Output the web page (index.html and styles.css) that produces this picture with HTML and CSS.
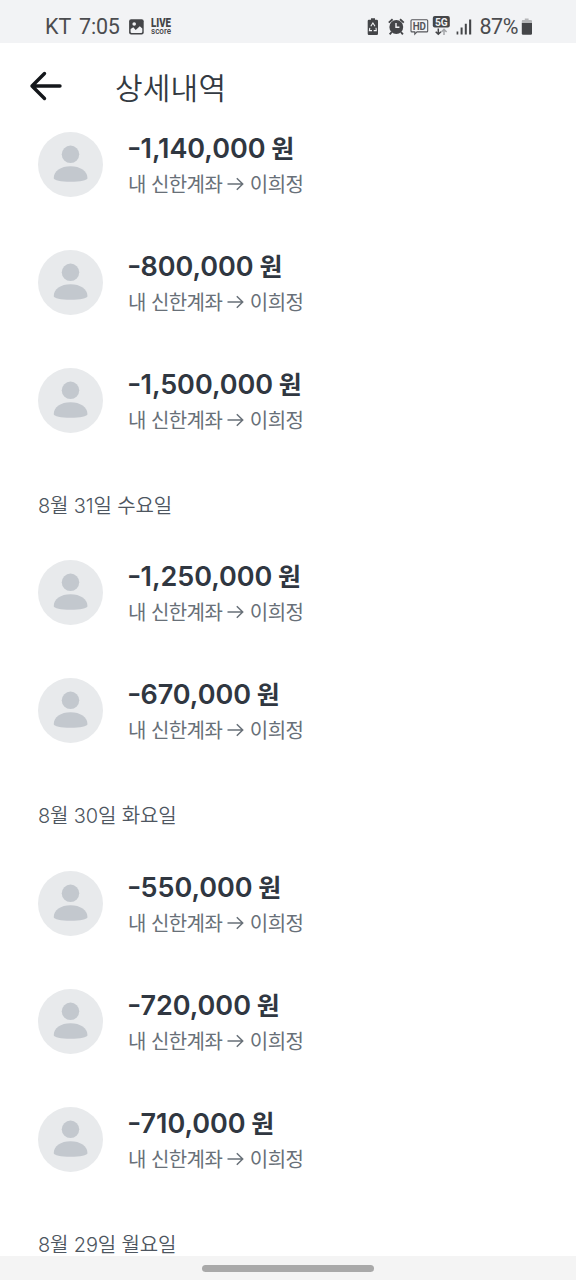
FILE: index.html
```html
<!DOCTYPE html>
<html lang="ko">
<head>
<meta charset="utf-8">
<title>상세내역</title>
<link rel="stylesheet" href="styles.css">
</head>
<body>
<svg width="0" height="0" class="defs">
  <symbol id="person" viewBox="0 0 64 64">
    <circle cx="32" cy="32" r="32" fill="#e8eaec"/>
    <circle cx="32" cy="22" r="8.600" fill="#c3c8ce"/>
    <path d="M15.500 45.500C15.500 38.500 22.500 33.800 32 33.800S48.700 38.500 48.700 45.500C48.700 47.300 41.500 49 32 49S15.500 47.300 15.500 45.500Z" fill="#c3c8ce"/>
  </symbol>
  <symbol id="to" viewBox="0 0 18 16">
    <path d="M.500 8H15.500M9.800 2.200L15.700 8L9.800 13.800" fill="none" stroke="currentColor" stroke-width="1.500"/>
  </symbol>
</svg>
<div class="screen">
  <div class="status">
    <span class="carrier">KT</span>
    <span class="clock">7:05</span>
    <svg class="picture" width="15" height="16" viewBox="0 0 15 16">
      <rect x=".1" y=".2" width="14.600" height="15.300" rx="2" fill="#444548"/>
      <path d="M1.600 10L4.300 8.300L6.700 11L10.800 7.200L13.300 9.600V12.700q0 1.300-1.300 1.300H2.900q-1.300 0-1.300-1.300Z" fill="#f2f3f5"/>
      <circle cx="5.200" cy="5" r="1.800" fill="#f2f3f5"/>
    </svg>
    <svg class="live" width="24" height="24" viewBox="0 0 24 24">
      <text x="0" y="12" class="live-top" textLength="20" lengthAdjust="spacingAndGlyphs">LIVE</text>
      <text x="0" y="19" class="live-bottom" textLength="20" lengthAdjust="spacingAndGlyphs">score</text>
    </svg>
    <svg class="right-icons" width="121" height="24" viewBox="0 0 121 24" fill="#444548">
      <path d="M5 3.200h4v1.600h1.800q1.200 0 1.200 1.200v12.700q0 1.300-1.200 1.300H2.900q-1.200 0-1.200-1.300V6q0-1.200 1.200-1.200H5Z"/>
      <path d="M4.800 11.200L6.900 8L9 11.200M10 12.800L10.300 15.600H7.700M6 15.600H3.400L3.800 12.800" fill="none" stroke="#f2f3f5" stroke-width="1.100"/>
      <circle cx="30.300" cy="12" r="6.900"/>
      <path d="M22.800 7.600L26.600 4.300M34 4.300L37.800 7.600M25.700 17L23.700 19.400M34.900 17L36.900 19.400" stroke="#444548" stroke-width="1.900"/>
      <path d="M30 7.900V12.300H33.400" fill="none" stroke="#f2f3f5" stroke-width="1.400"/>
      <path d="M46 4.800H60.700q1 0 1 1V15.900q0 1-1 1H51L48.800 19.200V16.900H46q-1 0-1-1V5.800q0-1 1-1Z" fill="none" stroke="#55565a" stroke-width="1.100"/>
      <text x="46.700" y="15" class="hd" textLength="13.300" lengthAdjust="spacingAndGlyphs">HD</text>
      <rect x="66.800" y="1" width="17" height="11.500" rx="2"/>
      <text x="69" y="10.700" class="five-g" textLength="12.800" lengthAdjust="spacingAndGlyphs">5G</text>
      <path d="M72.300 13.500V19M69.700 16.700L72.300 19.300L74.900 16.700" fill="none" stroke="#444548" stroke-width="1.500"/>
      <path d="M78 20V14.500M75.400 17L78 14.400L80.600 17" fill="none" stroke="#a4a6a9" stroke-width="1.500"/>
      <path d="M90.600 16.500h1.700V19.500h-1.700ZM94.600 12.500h2V19.500h-2ZM98.800 8.800h2V19.500h-2ZM103.100 4.500h2.100V19.500h-2.100Z"/>
    </svg>
    <span class="percent">87%</span>
    <svg class="battery" width="12" height="18" viewBox="0 0 12 18">
      <path d="M3.800 .500h3.800V2H10q1 0 1 1V5H.800V3q0-1 1-1H3.800Z" fill="#b5b6b8"/>
      <path d="M.800 5H11V15.500q0 1.200-1.200 1.200H2Q.800 16.700 .800 15.500Z" fill="#444548"/>
    </svg>
  </div>
  <header class="header">
    <svg class="back" width="34" height="30" viewBox="0 0 34 30">
      <path d="M31 15H3M15.500 2.500L3 15L15.500 27.500" fill="none" stroke="#14171b" stroke-width="3.400" stroke-linecap="round" stroke-linejoin="round"/>
    </svg>
    <h1>상세내역</h1>
  </header>
  <main class="list">
    <div class="row"><svg class="avatar"><use href="#person"/></svg><div class="info"><div class="amount"><span class="minus">-</span>1,140,000 <em>원</em></div><div class="route">내 신한계좌<svg class="arrow"><use href="#to"/></svg>이희정</div></div></div>
    <div class="row"><svg class="avatar"><use href="#person"/></svg><div class="info"><div class="amount"><span class="minus">-</span>800,000 <em>원</em></div><div class="route">내 신한계좌<svg class="arrow"><use href="#to"/></svg>이희정</div></div></div>
    <div class="row"><svg class="avatar"><use href="#person"/></svg><div class="info"><div class="amount"><span class="minus">-</span>1,500,000 <em>원</em></div><div class="route">내 신한계좌<svg class="arrow"><use href="#to"/></svg>이희정</div></div></div>
    <h2 class="date">8월 31일 수요일</h2>
    <div class="row"><svg class="avatar"><use href="#person"/></svg><div class="info"><div class="amount"><span class="minus">-</span>1,250,000 <em>원</em></div><div class="route">내 신한계좌<svg class="arrow"><use href="#to"/></svg>이희정</div></div></div>
    <div class="row"><svg class="avatar"><use href="#person"/></svg><div class="info"><div class="amount"><span class="minus">-</span>670,000 <em>원</em></div><div class="route">내 신한계좌<svg class="arrow"><use href="#to"/></svg>이희정</div></div></div>
    <h2 class="date">8월 30일 화요일</h2>
    <div class="row"><svg class="avatar"><use href="#person"/></svg><div class="info"><div class="amount"><span class="minus">-</span>550,000 <em>원</em></div><div class="route">내 신한계좌<svg class="arrow"><use href="#to"/></svg>이희정</div></div></div>
    <div class="row"><svg class="avatar"><use href="#person"/></svg><div class="info"><div class="amount"><span class="minus">-</span>720,000 <em>원</em></div><div class="route">내 신한계좌<svg class="arrow"><use href="#to"/></svg>이희정</div></div></div>
    <div class="row"><svg class="avatar"><use href="#person"/></svg><div class="info"><div class="amount"><span class="minus">-</span>710,000 <em>원</em></div><div class="route">내 신한계좌<svg class="arrow"><use href="#to"/></svg>이희정</div></div></div>
    <h2 class="date">8월 29일 월요일</h2>
  </main>
  <footer class="nav"><div class="handle"></div></footer>
</div>
</body>
</html>
```
FILE: styles.css
```css
* { box-sizing: border-box; }
body { margin: 0; background: #fff; }
.defs { position: absolute; }
svg { display: block; flex: none; }
.screen {
  width: 576px;
  height: 1280px;
  display: flex;
  flex-direction: column;
  overflow: hidden;
  font-family: Inter, "Noto Sans CJK KR", sans-serif;
}
.status {
  flex: none;
  height: 43px;
  padding: 10px 0 0 45px;
  display: flex;
  align-items: center;
  background: #f2f3f5;
  color: #4b4c4f;
  font: 400 21.5px/33px Roboto, sans-serif;
}
.carrier { width: 34px; }
.clock { width: 49px; letter-spacing: -0.2px; }
.picture { margin-left: 1px; }
.live { margin-left: 7px; fill: #444548; overflow: visible; }
.live-top { font: 900 12.5px Roboto, sans-serif; }
.live-bottom { font: 500 8.5px Roboto, sans-serif; }
.right-icons { margin-left: 190.5px; }
.hd { font: 700 10px Roboto, sans-serif; fill: #55565a; }
.five-g { font: 700 11.5px Roboto, sans-serif; fill: #f2f3f5; }
.percent { width: 40px; margin-left: -7px; font-size: 21.5px; letter-spacing: -0.5px; }
.battery { margin-left: 1px; }
.header {
  flex: none;
  height: 88px;
  padding: 0 29px;
  display: flex;
  align-items: flex-start;
}
.back { margin-top: 28px; }
.header h1 {
  margin: 21px 0 0 52px;
  font: 350 30px/44px "Noto Sans CJK KR", sans-serif;
  letter-spacing: 0.2px;
  color: #333a42;
}
.list { flex: none; height: 1125px; padding: 0.5px 0 0 38px; overflow: hidden; }
.row { height: 118px; display: flex; gap: 25.5px; }
.avatar { width: 65px; height: 65px; }
.info { margin-left: -0.5px; white-space: nowrap; }
.amount {
  height: 34px;
  font-size: 27px;
  line-height: 31px;
  font-weight: 600;
  letter-spacing: -0.05px;
  color: #303741;
}
.minus { display: inline-block; transform: translate(-1px, -1px) scaleX(1.15); transform-origin: left; }
.amount em { margin-left: -1px; font: 700 25px/31px "Noto Sans CJK KR", sans-serif; }
.route {
  height: 36px;
  display: flex;
  align-items: center;
  font: 400 20px/36px "Noto Sans CJK KR", sans-serif;
  letter-spacing: -0.55px;
  color: #687078;
}
.arrow { width: 18px; height: 16px; margin: 0 4.5px 0 5px; }
.date {
  height: 74.5px;
  margin: 0;
  font: 350 20px/41px Inter, "Noto Sans CJK KR", sans-serif;
  letter-spacing: -0.15px;
  color: #4e565f;
}
.nav {
  flex: none;
  height: 24px;
  margin-top: auto;
  padding: 9px 0 0 202px;
  background: #f4f4f4;
}
.handle { width: 172px; height: 7px; border-radius: 4px; background: #a9a9a9; }
```
